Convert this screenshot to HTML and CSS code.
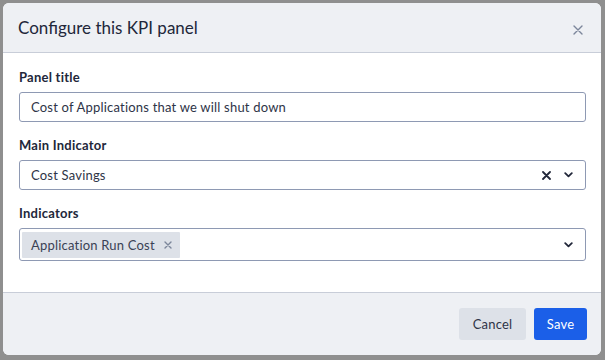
FILE: index.html
```html
<!DOCTYPE html>
<html>
<head>
<meta charset="utf-8">
<link rel="stylesheet" href="styles.css">
</head>
<body>
<div class="modal">
  <div class="modal-header">
    <h1 class="modal-title">Configure this KPI panel</h1>
    <button class="close-btn" aria-label="Close">
      <svg width="10" height="10" viewBox="0 0 10 10"><path d="M1 1L9 9M9 1L1 9" stroke="#7c869b" stroke-width="1.4" stroke-linecap="round"/></svg>
    </button>
  </div>
  <div class="modal-body">
    <div class="field">
      <label class="field-label">Panel title</label>
      <div class="input">Cost of Applications that we will shut down</div>
    </div>
    <div class="field">
      <label class="field-label">Main Indicator</label>
      <div class="input select">
        <span class="value">Cost Savings</span>
        <span class="icons">
          <svg width="9" height="9" viewBox="0 0 9 9"><path d="M1 1L8 8M8 1L1 8" stroke="#22273a" stroke-width="1.8" stroke-linecap="round"/></svg>
          <svg width="9" height="6" viewBox="0 0 9 6"><path d="M1.2 1.2L4.5 4.4L7.8 1.2" fill="none" stroke="#22273a" stroke-width="1.8" stroke-linecap="round" stroke-linejoin="round"/></svg>
        </span>
      </div>
    </div>
    <div class="field">
      <label class="field-label">Indicators</label>
      <div class="input multi">
        <span class="tag">Application Run Cost
          <svg width="8" height="8" viewBox="0 0 8 8"><path d="M1 1L7 7M7 1L1 7" stroke="#7c869b" stroke-width="1.4" stroke-linecap="round"/></svg>
        </span>
        <span class="icons">
          <svg width="9" height="6" viewBox="0 0 9 6"><path d="M1.2 1.2L4.5 4.4L7.8 1.2" fill="none" stroke="#22273a" stroke-width="1.8" stroke-linecap="round" stroke-linejoin="round"/></svg>
        </span>
      </div>
    </div>
  </div>
  <div class="modal-footer">
    <button class="btn btn-secondary">Cancel</button>
    <button class="btn btn-primary">Save</button>
  </div>
</div>
</body>
</html>
```
FILE: styles.css
```css
* { box-sizing: border-box; }
html, body { margin: 0; padding: 0; }
body {
  width: 605px;
  height: 360px;
  background: #8f8f8f;
  font-family: Lato, "Noto Sans", sans-serif;
  color: #22273a;
  overflow: hidden;
  padding: 3px 0 0 3px;
}
.modal {
  width: 598px;
  height: 352px;
  background: #fff;
  border-radius: 6px;
  overflow: hidden;
  display: flex;
  flex-direction: column;
}
.modal-header {
  height: 50px;
  background: #eef0f4;
  border-bottom: 1px solid #c8cdd8;
  display: flex;
  align-items: center;
  justify-content: space-between;
  padding: 0 18px 0 15px;
  flex: none;
}
.modal-title {
  margin: 0;
  font-size: 17px;
  font-weight: 400;
  color: #22273a;
}
.close-btn {
  border: 0;
  background: none;
  padding: 0;
  display: flex;
  margin-top: 4px;
}
.modal-body {
  flex: 1;
  padding: 15px 15px 0 16px;
  display: flex;
  flex-direction: column;
  gap: 14px;
}
.field {
  display: flex;
  flex-direction: column;
  gap: 6px;
}
.field-label {
  font-size: 13px;
  font-weight: 700;
  line-height: 18px;
  letter-spacing: 0.25px;
  color: #22273a;
}
.input {
  height: 30px;
  border: 1px solid #8e99b3;
  border-radius: 3px;
  padding: 0 11px;
  display: flex;
  align-items: center;
  font-size: 13px;
  letter-spacing: 0.2px;
  color: #2e3447;
}
.select { justify-content: space-between; }
.icons {
  display: flex;
  align-items: center;
  gap: 13px;
  padding-right: 1px;
}
.multi {
  height: 33px;
  padding: 0 11px 0 2px;
  justify-content: space-between;
}
.tag {
  background: #dde1e8;
  height: 26px;
  display: flex;
  align-items: center;
  gap: 9px;
  padding: 0 8px 0 9px;
  border-radius: 1px;
  color: #3a4155;
}
.modal-footer {
  height: 63px;
  flex: none;
  background: #eef0f4;
  border-top: 1px solid #c8cdd8;
  display: flex;
  align-items: center;
  justify-content: flex-end;
  gap: 8px;
  padding: 0 14px 0 0;
}
.btn {
  height: 32px;
  border: 0;
  border-radius: 3px;
  font-family: inherit;
  font-size: 13px;
  letter-spacing: 0.2px;
  padding: 0 12px;
}
.btn-secondary {
  background: #dde1e8;
  color: #2e3447;
  width: 67px;
}
.btn-primary {
  background: #1b5fe8;
  color: #fff;
  width: 53px;
}
```
